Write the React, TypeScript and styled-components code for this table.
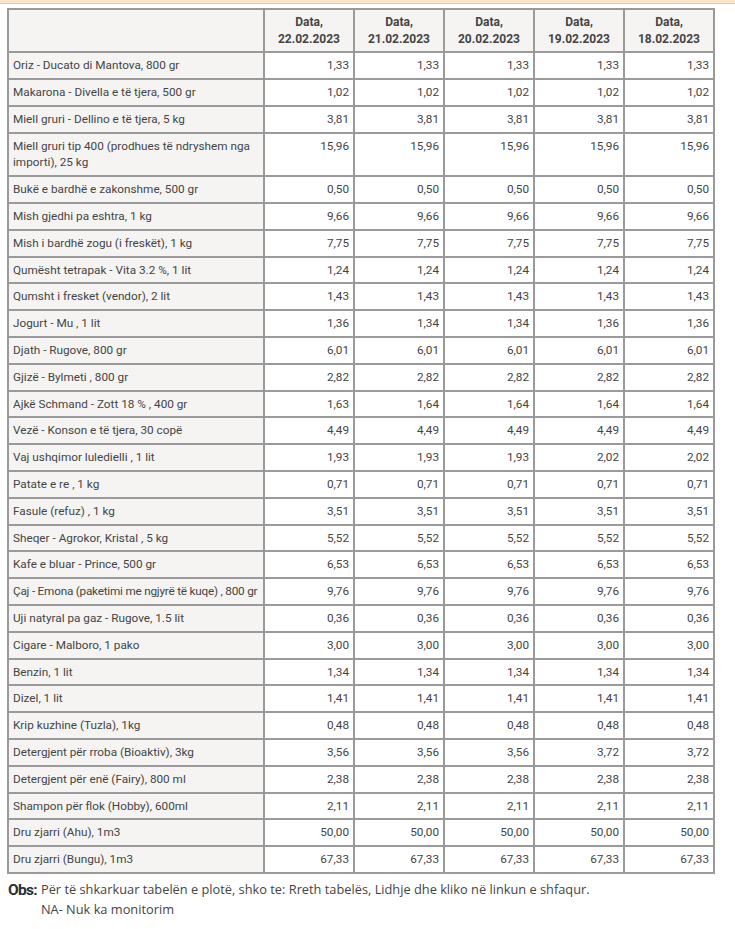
import React from "react";
import styled, { createGlobalStyle } from "styled-components";

const GlobalStyle = createGlobalStyle`
  html, body {
    margin: 0;
    padding: 0;
    background: #fff;
  }
`;

const dates = ["22.02.2023", "21.02.2023", "20.02.2023", "19.02.2023", "18.02.2023"];

const same = (v: string) => [v, v, v, v, v];

const rows: { name: string; values: string[]; tight?: boolean }[] = [
  { name: "Oriz - Ducato di Mantova, 800 gr", values: same("1,33") },
  { name: "Makarona - Divella e të tjera, 500 gr", values: same("1,02") },
  { name: "Miell gruri - Dellino e të tjera, 5 kg", values: same("3,81") },
  { name: "Miell gruri tip 400 (prodhues të ndryshem nga importi), 25 kg", values: same("15,96") },
  { name: "Bukë e bardhë e zakonshme, 500 gr", values: same("0,50") },
  { name: "Mish gjedhi pa eshtra, 1 kg", values: same("9,66") },
  { name: "Mish i bardhë zogu (i freskët), 1 kg", values: same("7,75") },
  { name: "Qumësht tetrapak - Vita 3.2 %, 1 lit", values: same("1,24") },
  { name: "Qumsht i fresket (vendor), 2 lit", values: same("1,43") },
  { name: "Jogurt - Mu , 1 lit", values: ["1,36", "1,34", "1,34", "1,36", "1,36"] },
  { name: "Djath - Rugove, 800 gr", values: same("6,01") },
  { name: "Gjizë - Bylmeti , 800 gr", values: same("2,82") },
  { name: "Ajkë Schmand - Zott 18 % , 400 gr", values: ["1,63", "1,64", "1,64", "1,64", "1,64"] },
  { name: "Vezë - Konson e të tjera, 30 copë", values: same("4,49") },
  { name: "Vaj ushqimor luledielli , 1 lit", values: ["1,93", "1,93", "1,93", "2,02", "2,02"] },
  { name: "Patate e re , 1 kg", values: same("0,71") },
  { name: "Fasule (refuz) , 1 kg", values: same("3,51") },
  { name: "Sheqer - Agrokor, Kristal , 5 kg", values: same("5,52") },
  { name: "Kafe e bluar - Prince, 500 gr", values: same("6,53") },
  { name: "Çaj - Emona (paketimi me ngjyrë të kuqe) , 800 gr", values: same("9,76"), tight: true },
  { name: "Uji natyral pa gaz - Rugove, 1.5 lit", values: same("0,36") },
  { name: "Cigare - Malboro, 1 pako", values: same("3,00") },
  { name: "Benzin, 1 lit", values: same("1,34") },
  { name: "Dizel, 1 lit", values: same("1,41") },
  { name: "Krip kuzhine (Tuzla), 1kg", values: same("0,48") },
  { name: "Detergjent për rroba (Bioaktiv), 3kg", values: ["3,56", "3,56", "3,56", "3,72", "3,72"] },
  { name: "Detergjent për enë (Fairy), 800 ml", values: same("2,38") },
  { name: "Shampon për flok (Hobby), 600ml", values: same("2,11") },
  { name: "Dru zjarri (Ahu), 1m3", values: same("50,00") },
  { name: "Dru zjarri (Bungu), 1m3", values: same("67,33") },
];

const App = () => {
  return (
    <>
      <GlobalStyle />
      <TopStrip />
      <Wrapper>
        <PriceTable>
          <colgroup>
            <col style={{ width: 256 }} />
            {dates.map((d) => (
              <col key={d} style={{ width: 90 }} />
            ))}
          </colgroup>
          <thead>
            <tr>
              <HeadCell />
              {dates.map((d) => (
                <HeadCell key={d}>
                  Data,
                  <br />
                  {d}
                </HeadCell>
              ))}
            </tr>
          </thead>
          <tbody>
            {rows.map((r) => (
              <tr key={r.name}>
                <NameCell $tight={r.tight}>{r.name}</NameCell>
                {r.values.map((v, i) => (
                  <ValueCell key={i}>{v}</ValueCell>
                ))}
              </tr>
            ))}
          </tbody>
        </PriceTable>
        <Note>
          <NoteLabel>Obs:</NoteLabel>
          <NoteText>
            Për të shkarkuar tabelën e plotë, shko te: Rreth tabelës, Lidhje dhe kliko në linkun e shfaqur.
            <br />
            NA- Nuk ka monitorim
          </NoteText>
        </Note>
      </Wrapper>
    </>
  );
};

export default App;

const TopStrip = styled.div`
  height: 3px;
  background: #fde6c8;
  border-bottom: 1px solid #f6c690;
`;

const Wrapper = styled.div`
  padding: 4px 0 0 7px;
`;

const PriceTable = styled.table`
  border-collapse: collapse;
  table-layout: fixed;
  width: 707px;
  border: 2px solid #9a9a9a;
  font-family: Roboto, "Noto Sans", sans-serif;
  font-size: 11.75px;
  line-height: 16.8px;
  color: #444;
`;

const HeadCell = styled.th`
  border: 2px solid #9a9a9a;
  background: #f5f4f3;
  padding: 4px 4px 3.6px;
  font-size: 12px;
  font-weight: 700;
  text-align: center;
  color: #444;
`;

const NameCell = styled.td<{ $tight?: boolean }>`
  border: 2px solid #9a9a9a;
  background: #f5f4f3;
  padding: 4px 3px 4px 4px;
  text-align: left;
  vertical-align: top;
  letter-spacing: ${({ $tight }) => ($tight ? "-0.22px" : "normal")};
`;

const ValueCell = styled.td`
  border: 2px solid #9a9a9a;
  background: #fff;
  padding: 4px 4px 4px;
  text-align: right;
  vertical-align: top;
`;

const Note = styled.div`
  display: flex;
  align-items: flex-start;
  gap: 4px;
  margin-top: 5px;
  padding-left: 1px;
`;

const NoteLabel = styled.span`
  font-family: Roboto, sans-serif;
  font-weight: 700;
  font-size: 15.5px;
  letter-spacing: -0.7px;
  line-height: 23px;
  color: #2b2f3a;
`;

const NoteText = styled.div`
  font-family: "Open Sans", sans-serif;
  font-size: 12.8px;
  line-height: 20px;
  color: #444;
`;
